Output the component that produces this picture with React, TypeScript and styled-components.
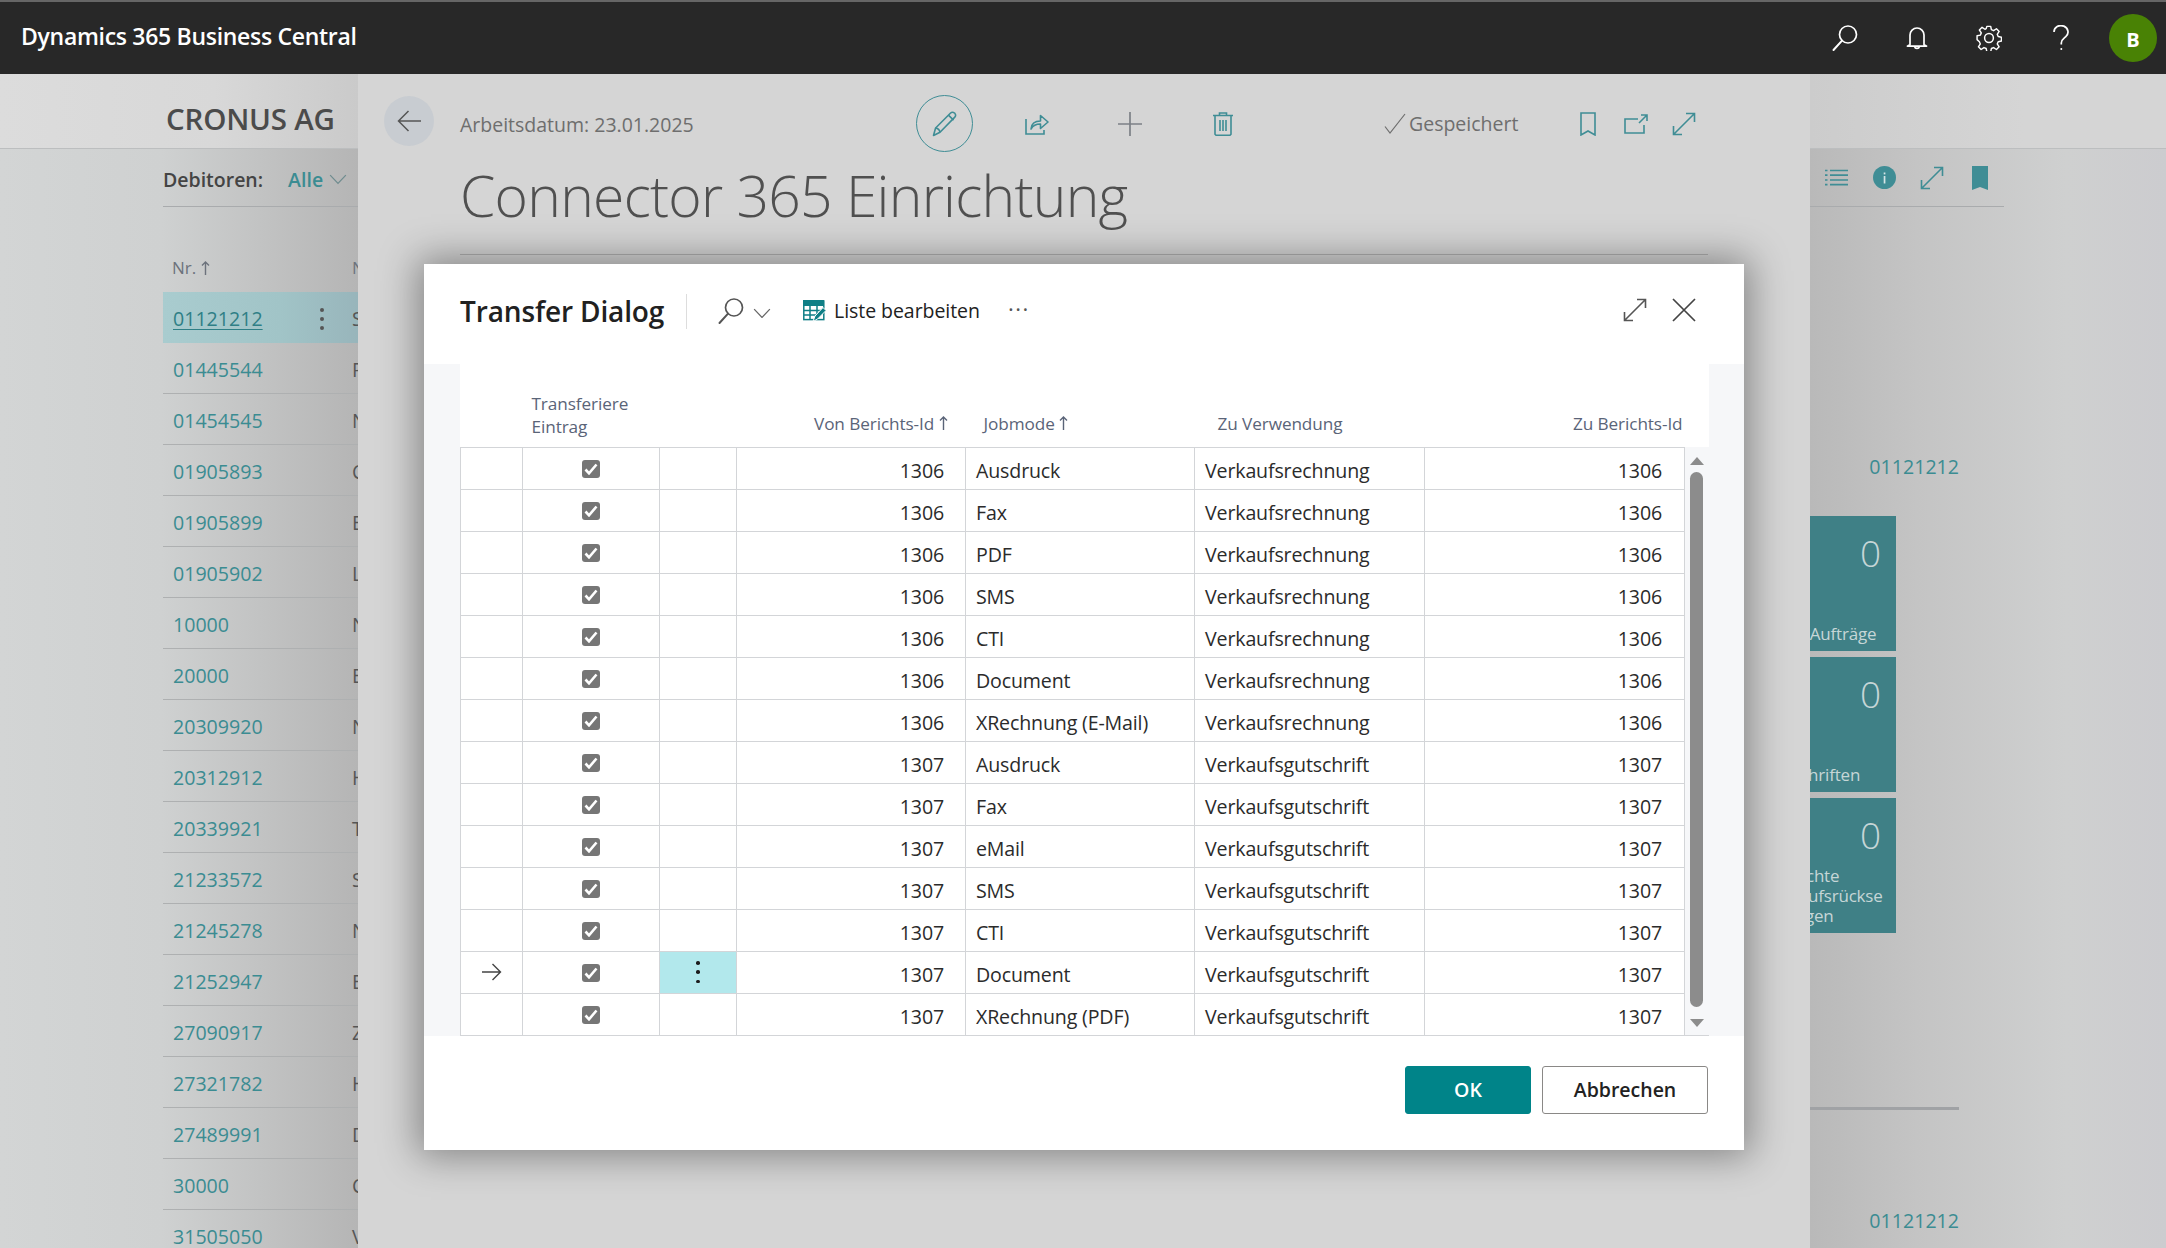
import styled, { createGlobalStyle } from "styled-components";

const teal = "#3f8d95";

const GlobalStyle = createGlobalStyle`
  html, body {
    margin: 0;
    padding: 0;
    width: 2166px;
    height: 1248px;
    overflow: hidden;
    background: #d5d5d5;
    font-family: "Open Sans", "Noto Sans", sans-serif;
  }
  * { box-sizing: border-box; }
`;

const customers = [
  ["01121212", "S"],
  ["01445544", "P"],
  ["01454545", "N"],
  ["01905893", "C"],
  ["01905899", "E"],
  ["01905902", "L"],
  ["10000", "N"],
  ["20000", "E"],
  ["20309920", "N"],
  ["20312912", "H"],
  ["20339921", "T"],
  ["21233572", "S"],
  ["21245278", "N"],
  ["21252947", "E"],
  ["27090917", "Z"],
  ["27321782", "H"],
  ["27489991", "D"],
  ["30000", "C"],
  ["31505050", "V"],
];

const rows = [
  ["1306", "Ausdruck", "Verkaufsrechnung"],
  ["1306", "Fax", "Verkaufsrechnung"],
  ["1306", "PDF", "Verkaufsrechnung"],
  ["1306", "SMS", "Verkaufsrechnung"],
  ["1306", "CTI", "Verkaufsrechnung"],
  ["1306", "Document", "Verkaufsrechnung"],
  ["1306", "XRechnung (E-Mail)", "Verkaufsrechnung"],
  ["1307", "Ausdruck", "Verkaufsgutschrift"],
  ["1307", "Fax", "Verkaufsgutschrift"],
  ["1307", "eMail", "Verkaufsgutschrift"],
  ["1307", "SMS", "Verkaufsgutschrift"],
  ["1307", "CTI", "Verkaufsgutschrift"],
  ["1307", "Document", "Verkaufsgutschrift"],
  ["1307", "XRechnung (PDF)", "Verkaufsgutschrift"],
];

const Page = styled.div`
  width: 2166px;
  height: 1248px;
  display: flex;
  flex-direction: column;
  overflow: hidden;
`;

const TopBar = styled.header`
  height: 74px;
  flex: none;
  display: flex;
  align-items: center;
  background: #282828;
  border-top: 2px solid #666;
  padding: 0 9px 0 21px;
`;

const Brand = styled.div`
  color: #fff;
  font-size: 23px;
  font-weight: 600;
  letter-spacing: -0.3px;
  flex: 1;
  margin-top: -5px;
`;

const TopIcon = styled.button`
  width: 72px;
  height: 48px;
  padding: 0;
  border: 0;
  background: none;
  display: flex;
  align-items: center;
  justify-content: center;
`;

const Avatar = styled.div`
  width: 48px;
  height: 48px;
  margin-left: 12px;
  border-radius: 50%;
  background: #498205;
  color: #fff;
  font-size: 20px;
  font-weight: 700;
  display: flex;
  align-items: center;
  justify-content: center;
  padding-top: 3px;
`;

const Stage = styled.main`
  flex: 1;
  min-height: 0;
  display: grid;
  grid-template-columns: 358px 1452px 356px;
`;

const SidePane = styled.section<{ $right?: boolean }>`
  position: relative;
  overflow: hidden;
  background: ${(p) =>
    p.$right
      ? "linear-gradient(90deg, #b9b9b9 0, #c4c4c4 30%, #cfd0d0 72%, #cccccf 100%)"
      : "linear-gradient(90deg, #d3d5d5 0, #cfd1d1 45%, #b5b5b5 100%)"};
`;

const CompanyBand = styled.div<{ $right?: boolean }>`
  height: 75px;
  padding: 26px 0 0 166px;
  color: #4b4b4b;
  font-size: 29.5px;
  font-weight: 600;
  letter-spacing: -0.2px;
  line-height: 38px;
  border-bottom: 1px solid #bcbebf;
  background: ${(p) =>
    p.$right
      ? "linear-gradient(90deg, #cccccc, #d5d5d5 60%)"
      : "linear-gradient(90deg, #dcdcdc, #d8d8d8 60%, #cacaca)"};
`;

const FilterRow = styled.div`
  height: 58px;
  margin-left: 163px;
  padding-top: 4px;
  display: flex;
  align-items: center;
  border-bottom: 1px solid #a9abad;
  font-size: 19.5px;
`;

const FilterLabel = styled.span`
  color: #444;
  font-weight: 600;
`;

const FilterValue = styled.span`
  color: #3b8c92;
  font-weight: 600;
  margin-left: 25px;
  margin-right: 6px;
`;

const PaneTools = styled.div`
  width: 194px;
  height: 58px;
  display: flex;
  align-items: center;
  padding-left: 2px;
  border-bottom: 1px solid #a9abad;
`;

const ListHead = styled.div`
  height: 85px;
  margin-left: 163px;
  display: grid;
  grid-template-columns: 189px 1fr;
  align-items: end;
  padding-bottom: 13px;
  color: #6c727c;
  font-size: 17px;
`;

const HeadNo = styled.span`
  padding-left: 9px;
  display: flex;
  align-items: center;
  gap: 5px;
`;

const ListRow = styled.div<{ $selected?: boolean }>`
  height: 51px;
  margin-left: 163px;
  display: grid;
  grid-template-columns: 189px 1fr;
  align-items: center;
  font-size: 19.6px;
  padding-top: 3px;
  border-bottom: 1px solid ${(p) => (p.$selected ? "transparent" : "#aeb0b1")};
  background: ${(p) =>
    p.$selected ? "linear-gradient(90deg, #a9cccf, #a1c4c7 60%, #98b5bb)" : "transparent"};
`;

const ListNo = styled.div`
  display: flex;
  align-items: center;
  justify-content: space-between;
  padding: 0 28px 0 10px;
  color: #3b8c92;
`;

const NoText = styled.span<{ $selected?: boolean }>`
  color: ${(p) => (p.$selected ? "#2f7f86" : "inherit")};
  text-decoration: ${(p) => (p.$selected ? "underline" : "none")};
  text-underline-offset: 3px;
`;

const ListName = styled.span`
  color: #555;
`;

const KebabDots = styled.span<{ $dark?: boolean }>`
  width: ${(p) => (p.$dark ? 3.5 : 4)}px;
  height: 22px;
  display: flex;
  flex-direction: column;
  justify-content: space-between;
  & > i {
    display: block;
    width: ${(p) => (p.$dark ? 3.5 : 4)}px;
    height: ${(p) => (p.$dark ? 3.5 : 4)}px;
    border-radius: 50%;
    background: ${(p) => (p.$dark ? "#1c1c1c" : "#555")};
  }
`;

const FactBody = styled.div`
  padding-top: 247px;
`;

const FactNo = styled.div`
  width: 149px;
  text-align: right;
  color: #3b8c92;
  font-size: 19.6px;
  line-height: 26px;
`;

const TileStack = styled.div`
  margin: 36px 0 0 -46px;
  width: 132px;
  display: flex;
  flex-direction: column;
  gap: 6px;
`;

const Tile = styled.div`
  height: 135px;
  padding: 12px 0 7px 0;
  background: #3f8086;
  color: #c6d6d7;
  display: flex;
  flex-direction: column;
  justify-content: space-between;
`;

const TileCount = styled.div`
  padding-right: 15px;
  text-align: right;
  font-size: 37px;
  font-weight: 300;
  line-height: 50px;
`;

const TileLabel = styled.div`
  padding-right: 9px;
  font-size: 17px;
  line-height: 20px;
  letter-spacing: -0.2px;
  overflow-wrap: anywhere;
`;

const FactRule = styled.div`
  width: 149px;
  height: 3px;
  margin-top: 174px;
  background: #a0a2a5;
`;

const FactNoLast = styled(FactNo)`
  margin-top: 98px;
`;

const Panel = styled.section`
  position: relative;
  background: #d5d5d5;
`;

const ToolRow = styled.div`
  display: flex;
  align-items: center;
  height: 57px;
  margin-top: 21px;
  padding-left: 26px;
`;

const BackButton = styled.button`
  width: 50px;
  height: 50px;
  padding: 0;
  margin: -6px 26px 0 0;
  border: 0;
  border-radius: 50%;
  background: #c8ccd1;
  display: flex;
  align-items: center;
  justify-content: center;
`;

const WorkDate = styled.div`
  width: 456px;
  color: #6e6e6e;
  font-size: 19.5px;
  padding-top: 2px;
`;

const EditCircle = styled.button`
  width: 57px;
  height: 57px;
  padding: 0;
  margin-right: 17px;
  border: 1px solid ${teal};
  border-radius: 50%;
  background: none;
  display: flex;
  align-items: center;
  justify-content: center;
`;

const ToolSlot = styled.span<{ $w?: number }>`
  width: ${(p) => p.$w ?? 93}px;
  display: flex;
  align-items: center;
  justify-content: center;
`;

const Saved = styled.div`
  width: 135px;
  margin: 0 45px 0 115px;
  display: flex;
  align-items: center;
  gap: 3px;
  color: #6e6e6e;
  font-size: 19.5px;
  white-space: nowrap;
`;

const PageTitle = styled.h1`
  height: 103px;
  margin: 0 102px;
  color: #505050;
  font-size: 57px;
  font-weight: 300;
  line-height: 86px;
  letter-spacing: -0.75px;
  border-bottom: 1px solid #b0b0b0;
`;

const Dialog = styled.div`
  position: absolute;
  top: 190px;
  left: 66px;
  width: 1320px;
  height: 886px;
  display: flex;
  flex-direction: column;
  background: #fff;
  box-shadow: 0 0 36px 6px rgba(0, 0, 0, 0.38);
`;

const DialogHead = styled.div`
  height: 100px;
  flex: none;
  display: flex;
  align-items: center;
  padding: 0 48px 6px 36px;
`;

const DialogTitle = styled.h2`
  margin: 0;
  width: 226px;
  color: #212121;
  font-size: 28px;
  font-weight: 600;
  letter-spacing: -0.13px;
  white-space: nowrap;
`;

const HeadDivider = styled.span`
  width: 1px;
  height: 35px;
  background: #ddd;
  margin-right: 30px;
`;

const SearchChevron = styled.span`
  margin: 4px 0 0 8px;
  display: flex;
`;

const EditListButton = styled.div`
  margin: -1px 0 0 32px;
  display: flex;
  align-items: center;
  gap: 7px;
  color: #212121;
  font-size: 19.5px;
  letter-spacing: -0.05px;
`;

const MoreDots = styled.span`
  margin: -6px 0 0 28px;
  color: #555;
  font-size: 22px;
  letter-spacing: 1.5px;
  line-height: 1;
`;

const HeadRight = styled.div`
  margin-left: auto;
  display: flex;
  align-items: center;
  gap: 25px;
  margin-top: -2px;
`;

const DialogBody = styled.div`
  height: 672px;
  flex: none;
  padding: 0 36px;
  background: #f6f7f9;
`;

const GridTable = styled.table`
  width: 1248px;
  table-layout: fixed;
  border-collapse: collapse;
  background: #fff;
`;

const HeadCell = styled.th<{ $right?: number; $pad?: number; $bottom?: number }>`
  height: 83px;
  padding: 0 ${(p) => p.$right ?? 0}px ${(p) => p.$bottom ?? 12}px ${(p) => p.$pad ?? 0}px;
  vertical-align: bottom;
  text-align: ${(p) => (p.$right !== undefined ? "right" : "left")};
  color: #5a6478;
  font-size: 17.2px;
  font-weight: 400;
  line-height: 23px;
  letter-spacing: -0.1px;
  white-space: nowrap;
`;

const Cell = styled.td<{ $right?: number; $active?: boolean }>`
  height: 42px;
  padding: 5px ${(p) => p.$right ?? 0}px 0 ${(p) => (p.$right ? 0 : 10)}px;
  border: 1px solid #d3d5d8;
  color: #2b2b2b;
  font-size: 19.6px;
  letter-spacing: -0.15px;
  line-height: 24px;
  text-align: ${(p) => (p.$right ? "right" : "left")};
  white-space: nowrap;
  background: ${(p) => (p.$active ? "#b2e8ec" : "#fff")};
`;

const CheckCell = styled(Cell)`
  padding: 0;
`;

const CenterBox = styled.div`
  display: flex;
  align-items: center;
  justify-content: center;
`;

const CheckBox = styled.span`
  width: 18px;
  height: 18px;
  margin-top: 1px;
  border-radius: 3px;
  background: #767676;
  display: flex;
  align-items: center;
  justify-content: center;
`;

const ScrollCell = styled.td`
  padding: 0;
  height: 588px;
  background: #f6f7f9;
  border-bottom: 1px solid #d3d5d8;
  vertical-align: top;
`;

const ScrollTrack = styled.div`
  height: 587px;
  display: flex;
  flex-direction: column;
  align-items: center;
  padding-top: 10px;
`;

const ScrollThumb = styled.div`
  width: 13px;
  height: 535px;
  margin: 7px 0 12px;
  border-radius: 7px;
  background: #8c8c8c;
`;

const DialogFoot = styled.div`
  flex: 1;
  display: flex;
  justify-content: flex-end;
  gap: 11px;
  padding: 30px 36px 0 0;
`;

const FootButton = styled.button<{ $primary?: boolean }>`
  width: ${(p) => (p.$primary ? 126 : 166)}px;
  height: 48px;
  padding: 0 0 2px;
  border: 1px solid ${(p) => (p.$primary ? "#008489" : "#8a8886")};
  border-radius: 3px;
  background: ${(p) => (p.$primary ? "#008489" : "#fff")};
  color: ${(p) => (p.$primary ? "#fff" : "#222")};
  font-family: inherit;
  font-size: 19.5px;
  font-weight: 600;
`;

const SearchIcon = ({ color, size = 28 }: { color: string; size?: number }) => (
  <svg width={size} height={size} viewBox="0 0 28 28" fill="none" stroke={color} strokeWidth="1.7">
    <circle cx="17" cy="10.5" r="8.5" />
    <path d="M11 16.6 2.5 26" strokeLinecap="round" strokeWidth="2" />
  </svg>
);

const BellIcon = () => (
  <svg width="22" height="26" viewBox="0 0 22 26" fill="none" stroke="#fff" strokeWidth="1.7">
    <path d="M4 19.5V10a7 7 0 0 1 14 0v9.5l2.6 1.6H1.4z" strokeLinejoin="round" />
    <path d="M8.5 21.5a2.6 2.6 0 0 0 5 0" />
  </svg>
);

const GearIcon = () => (
  <svg width="26" height="26" viewBox="0 0 26 26" fill="none" stroke="#fff" strokeWidth="1.5" strokeLinejoin="round">
    <circle cx="13" cy="13" r="4.4" />
    <path
      d="M11 1.2h4l.7 3.5 2.3 1 3-2 2.8 2.8-2 3 1 2.3 3.4.7v4l-3.4.7-1 2.3 2 3-2.8 2.8-3-2-2.3 1-.7 3.4h-4l-.7-3.4-2.3-1-3 2-2.8-2.8 2-3-1-2.3L.8 15v-4l3.4-.7 1-2.3-2-3L6 2.2l3 2 1.3-.6z"
      transform="translate(.3 .2) scale(.96)"
    />
  </svg>
);

const HelpIcon = () => (
  <svg width="18" height="26" viewBox="0 0 18 26" fill="none" stroke="#fff" strokeWidth="1.7">
    <path d="M2 7a7 6.4 0 1 1 11.6 4.8c-2.3 2-4.3 3.1-4.300 6.200v1.600" />
    <circle cx="9.3" cy="24" r="1" fill="#fff" stroke="none" />
  </svg>
);

const ChevronIcon = ({ color, size = 18 }: { color: string; size?: number }) => (
  <svg width={size} height={size * 0.6} viewBox="0 0 18 11" fill="none" stroke={color} strokeWidth="1.3">
    <path d="M1 1.2 9 9.6l8-8.400" />
  </svg>
);

const SortArrow = ({ color = "#6c727c" }: { color?: string }) => (
  <svg width="9" height="14" viewBox="0 0 9 14" fill="none" stroke={color} strokeWidth="1.4">
    <path d="M4.5 14V1M1 4.500 4.500 1 8 4.500" />
  </svg>
);

const BackArrow = () => (
  <svg width="24" height="22" viewBox="0 0 24 22" fill="none" stroke="#555" strokeWidth="1.5">
    <path d="M24 11H1.500M11.500 1 1.500 11l10 10" />
  </svg>
);

const RowArrow = () => (
  <svg width="20" height="18" viewBox="0 0 20 18" fill="none" stroke="#444" strokeWidth="1.4">
    <path d="M0 9h18.500M10.500 1l8 8-8 8" />
  </svg>
);

const PencilIcon = () => (
  <svg width="26" height="26" viewBox="0 0 26 26" fill="none" stroke={teal} strokeWidth="1.6" strokeLinejoin="round">
    <path d="M1.500 24.500 3.600 17 18.600 2a3 3 0 0 1 4.900 1.600c.3 1.100 0 1.800-.7 2.500L8 21.200z" />
    <path d="M3.600 17c2.400.4 4 2 4.400 4.200M16.400 4.200l5.200 5" />
  </svg>
);

const ShareIcon = () => (
  <svg width="24" height="22" viewBox="0 0 24 22" fill="none" stroke={teal} strokeWidth="1.6">
    <path d="M1 6v15h18v-4" />
    <path d="M6 16c.4-5.400 4.300-8 9.500-8V2.500L23 9l-7.500 6.500V11c-4 0-7.500 1.300-9.500 5z" strokeLinejoin="round" />
  </svg>
);

const PlusIcon = () => (
  <svg width="24" height="24" viewBox="0 0 24 24" fill="none" stroke="#7c8086" strokeWidth="1.7">
    <path d="M12 0v24M0 12h24" />
  </svg>
);

const TrashIcon = () => (
  <svg width="20" height="24" viewBox="0 0 20 24" fill="none" stroke={teal} strokeWidth="1.6">
    <path d="M0 3.500h20M6.500 3.500V1h7v2.500M2 3.500v18.700l1 1h14l1-1V3.500" />
    <path d="M7 8v11M10 8v11M13 8v11" />
  </svg>
);

const CheckIcon = () => (
  <svg width="22" height="22" viewBox="0 0 22 22" fill="none" stroke="#6e6e6e" strokeWidth="1.2">
    <path d="M1 13.500 6 20 21 1" />
  </svg>
);

const BookmarkIcon = () => (
  <svg width="16" height="24" viewBox="0 0 16 24" fill="none" stroke={teal} strokeWidth="1.6">
    <path d="M1 1h14v22l-7-4-7 4z" />
  </svg>
);

const OpenIcon = () => (
  <svg width="24" height="20" viewBox="0 0 24 20" fill="none" stroke={teal} strokeWidth="1.6">
    <path d="M14 5H1v14h19v-8M15 9l8-8M17 1h6v6" />
  </svg>
);

const ExpandIcon = ({ color = teal, size = 24 }: { color?: string; size?: number }) => (
  <svg width={size} height={size} viewBox="0 0 24 24" fill="none" stroke={color} strokeWidth="1.6">
    <path d="M1.500 22.500 22.500 1.500M14 1.500h8.500V10M1.500 14v8.500H10" />
  </svg>
);

const CloseIcon = () => (
  <svg width="24" height="24" viewBox="0 0 24 24" fill="none" stroke="#444" strokeWidth="1.7">
    <path d="M1 1l22 22M23 1 1 23" />
  </svg>
);

const EditListIcon = () => (
  <svg width="24" height="22" viewBox="0 0 24 22" fill="none">
    <rect x="0.8" y="1" width="20" height="18.600" stroke="#0f7f86" strokeWidth="1.500" />
    <rect x="0" y="0" width="21" height="6" fill="#0f7f86" />
    <path d="M1 10.500h20M1 15h12M7 6v14M14 6v8" stroke="#0f7f86" strokeWidth="1.500" />
    <path d="M10 21.500 12 16 20 7.500l3 3-8.400 8.500z" fill="#0f7f86" stroke="#fff" strokeWidth="1" />
  </svg>
);

const ListIcon = () => (
  <svg width="23" height="17" viewBox="0 0 23 17" fill="none" stroke={teal} strokeWidth="1.700">
    <path d="M5 1.500h18M5 6.200h18M5 11h18M5 15.700h18M0 1.500h2.500M0 6.200h2.500M0 11h2.500M0 15.700h2.500" />
  </svg>
);

const InfoIcon = () => (
  <svg width="23" height="23" viewBox="0 0 23 23">
    <circle cx="11.500" cy="11.500" r="11.500" fill={teal} />
    <rect x="10.700" y="10" width="1.700" height="7.500" fill="#d5e5e6" />
    <rect x="10.700" y="6.500" width="1.700" height="1.900" fill="#d5e5e6" />
  </svg>
);

const BookmarkFilled = () => (
  <svg width="16" height="24" viewBox="0 0 16 24">
    <path d="M0 0h16v24l-8-3-8 3z" fill={teal} />
  </svg>
);

const TickIcon = () => (
  <svg width="14" height="12" viewBox="0 0 14 12" fill="none" stroke="#fff" strokeWidth="2.600">
    <path d="M1.500 6.500 5 10.300 12.500 1.500" />
  </svg>
);

const Kebab = ({ dark }: { dark?: boolean }) => (
  <KebabDots $dark={dark}>
    <i />
    <i />
    <i />
  </KebabDots>
);

export default function App() {
  return (
    <Page>
      <GlobalStyle />
      <TopBar>
        <Brand>Dynamics 365 Business Central</Brand>
        <TopIcon>
          <SearchIcon color="#fff" />
        </TopIcon>
        <TopIcon>
          <BellIcon />
        </TopIcon>
        <TopIcon>
          <GearIcon />
        </TopIcon>
        <TopIcon>
          <HelpIcon />
        </TopIcon>
        <Avatar>B</Avatar>
      </TopBar>
      <Stage>
        <SidePane>
          <CompanyBand>CRONUS AG</CompanyBand>
          <FilterRow>
            <FilterLabel>Debitoren:</FilterLabel>
            <FilterValue>Alle</FilterValue>
            <ChevronIcon color="#6f8c8f" />
          </FilterRow>
          <ListHead>
            <HeadNo>
              Nr. <SortArrow />
            </HeadNo>
            <span>N</span>
          </ListHead>
          {customers.map(([no, name], i) => (
            <ListRow key={no} $selected={i === 0}>
              <ListNo>
                <NoText $selected={i === 0}>{no}</NoText>
                {i === 0 && <Kebab />}
              </ListNo>
              <ListName>{name}</ListName>
            </ListRow>
          ))}
        </SidePane>

        <Panel>
          <ToolRow>
            <BackButton>
              <BackArrow />
            </BackButton>
            <WorkDate>Arbeitsdatum: 23.01.2025</WorkDate>
            <EditCircle>
              <PencilIcon />
            </EditCircle>
            <ToolSlot>
              <ShareIcon />
            </ToolSlot>
            <ToolSlot>
              <PlusIcon />
            </ToolSlot>
            <ToolSlot>
              <TrashIcon />
            </ToolSlot>
            <Saved>
              <CheckIcon />
              Gespeichert
            </Saved>
            <ToolSlot $w={48}>
              <BookmarkIcon />
            </ToolSlot>
            <ToolSlot $w={48}>
              <OpenIcon />
            </ToolSlot>
            <ToolSlot $w={48}>
              <ExpandIcon />
            </ToolSlot>
          </ToolRow>
          <PageTitle>Connector 365 Einrichtung</PageTitle>

          <Dialog>
            <DialogHead>
              <DialogTitle>Transfer Dialog</DialogTitle>
              <HeadDivider />
              <SearchIcon color="#555" />
              <SearchChevron>
                <ChevronIcon color="#666" />
              </SearchChevron>
              <EditListButton>
                <EditListIcon />
                Liste bearbeiten
              </EditListButton>
              <MoreDots>···</MoreDots>
              <HeadRight>
                <ExpandIcon color="#555" />
                <CloseIcon />
              </HeadRight>
            </DialogHead>
            <DialogBody>
              <GridTable>
                <colgroup>
                  <col style={{ width: 62 }} />
                  <col style={{ width: 137 }} />
                  <col style={{ width: 77 }} />
                  <col style={{ width: 229 }} />
                  <col style={{ width: 229 }} />
                  <col style={{ width: 230 }} />
                  <col style={{ width: 260 }} />
                  <col style={{ width: 24 }} />
                </colgroup>
                <thead>
                  <tr>
                    <HeadCell />
                    <HeadCell $pad={9} $bottom={9}>
                      Transferiere
                      <br />
                      Eintrag
                    </HeadCell>
                    <HeadCell />
                    <HeadCell $right={18}>
                      Von Berichts-Id <SortArrow color="#5a6478" />
                    </HeadCell>
                    <HeadCell $pad={18}>
                      Jobmode <SortArrow color="#5a6478" />
                    </HeadCell>
                    <HeadCell $pad={23}>Zu Verwendung</HeadCell>
                    <HeadCell $right={2}>Zu Berichts-Id</HeadCell>
                    <HeadCell />
                  </tr>
                </thead>
                <tbody>
                  {rows.map(([id, mode, usage], i) => (
                    <tr key={i}>
                      <CheckCell>
                        {i === 12 && (
                          <CenterBox>
                            <RowArrow />
                          </CenterBox>
                        )}
                      </CheckCell>
                      <CheckCell>
                        <CenterBox>
                          <CheckBox>
                            <TickIcon />
                          </CheckBox>
                        </CenterBox>
                      </CheckCell>
                      <CheckCell $active={i === 12}>
                        {i === 12 && (
                          <CenterBox>
                            <Kebab dark />
                          </CenterBox>
                        )}
                      </CheckCell>
                      <Cell $right={21}>{id}</Cell>
                      <Cell>{mode}</Cell>
                      <Cell>{usage}</Cell>
                      <Cell $right={22}>{id}</Cell>
                      {i === 0 && (
                        <ScrollCell rowSpan={rows.length}>
                          <ScrollTrack>
                            <svg width="14" height="8" viewBox="0 0 14 8">
                              <path d="M7 0l7 8H0z" fill="#8c8c8c" />
                            </svg>
                            <ScrollThumb />
                            <svg width="14" height="8" viewBox="0 0 14 8">
                              <path d="M7 8l7-8H0z" fill="#8c8c8c" />
                            </svg>
                          </ScrollTrack>
                        </ScrollCell>
                      )}
                    </tr>
                  ))}
                </tbody>
              </GridTable>
            </DialogBody>
            <DialogFoot>
              <FootButton $primary>OK</FootButton>
              <FootButton>Abbrechen</FootButton>
            </DialogFoot>
          </Dialog>
        </Panel>

        <SidePane $right>
          <CompanyBand $right />
          <PaneTools>
            <ToolSlot $w={48}>
              <ListIcon />
            </ToolSlot>
            <ToolSlot $w={48}>
              <InfoIcon />
            </ToolSlot>
            <ToolSlot $w={48}>
              <ExpandIcon />
            </ToolSlot>
            <ToolSlot $w={48}>
              <BookmarkFilled />
            </ToolSlot>
          </PaneTools>
          <FactBody>
            <FactNo>01121212</FactNo>
            <TileStack>
              <Tile>
                <TileCount>0</TileCount>
                <TileLabel>Neue Aufträge</TileLabel>
              </Tile>
              <Tile>
                <TileCount>0</TileCount>
                <TileLabel>Gutschriften</TileLabel>
              </Tile>
              <Tile>
                <TileCount>0</TileCount>
                <TileLabel>Gebuchte Verkaufsrücksendungen</TileLabel>
              </Tile>
            </TileStack>
            <FactRule />
            <FactNoLast>01121212</FactNoLast>
          </FactBody>
        </SidePane>
      </Stage>
    </Page>
  );
}
